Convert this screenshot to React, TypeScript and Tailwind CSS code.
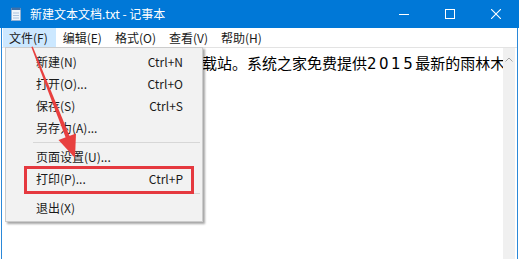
import React from 'react'

const FONT = "font-['Microsoft_YaHei','Noto_Sans_CJK_SC',sans-serif]"

const MENUS = ['文件(F)', '编辑(E)', '格式(O)', '查看(V)', '帮助(H)']

type Item = { label: string; key?: string } | 'sep'

const ITEMS: Item[] = [
  { label: '新建(N)', key: 'Ctrl+N' },
  { label: '打开(O)...', key: 'Ctrl+O' },
  { label: '保存(S)', key: 'Ctrl+S' },
  { label: '另存为(A)...' },
  'sep',
  { label: '页面设置(U)...' },
  { label: '打印(P)...', key: 'Ctrl+P' },
  'sep',
  { label: '退出(X)' },
]

function NotepadIcon() {
  return (
    <svg width="10" height="14" viewBox="0 0 10 14">
      <rect x="0.5" y="1.5" width="9" height="12" fill="#eef4fb" stroke="#8fb0d4" />
      <rect x="0.5" y="0.5" width="9" height="2.5" fill="#3d6fa8" />
      <line x1="2" y1="6" x2="8" y2="6" stroke="#a9c2de" />
      <line x1="2" y1="8.5" x2="8" y2="8.5" stroke="#a9c2de" />
      <line x1="2" y1="11" x2="8" y2="11" stroke="#a9c2de" />
    </svg>
  )
}

function WindowButtons() {
  return (
    <div className="flex h-full">
      <div className="w-[46px] h-full flex items-center justify-center">
        <svg width="10" height="10" viewBox="0 0 10 10">
          <line x1="0" y1="5.5" x2="10" y2="5.5" stroke="#fff" />
        </svg>
      </div>
      <div className="w-[46px] h-full flex items-center justify-center">
        <svg width="10" height="10" viewBox="0 0 10 10">
          <rect x="0.5" y="0.5" width="9" height="9" fill="none" stroke="#fff" />
        </svg>
      </div>
      <div className="w-[46px] h-full flex items-center justify-center">
        <svg width="10" height="10" viewBox="0 0 10 10">
          <path d="M0 0L10 10M10 0L0 10" stroke="#fff" strokeWidth="1.1" />
        </svg>
      </div>
    </div>
  )
}

function FileMenu() {
  return (
    <div className="absolute left-[5px] top-[47px] w-[198px] h-[175px] bg-[#f2f2f2] border border-[#cccccc] shadow-[2px_2px_2px_rgba(0,0,0,0.35)] pt-[3px] text-[12px] text-[#1a1a1a]">
      {ITEMS.map((it, i) =>
        it === 'sep' ? (
          <div key={i} className="h-[7px] flex items-center ml-[27px] mr-[2px]">
            <div className="h-px w-full bg-[#d7d7d7]" />
          </div>
        ) : (
          <div key={i} className="h-[22px] flex items-center justify-between pl-[30px] pr-[19px]">
            <span>{it.label}</span>
            {it.key && <span>{it.key}</span>}
          </div>
        )
      )}
    </div>
  )
}

function Arrow() {
  return (
    <svg className="absolute inset-0 pointer-events-none" width="519" height="259" viewBox="0 0 519 259">
      <polygon points="31.3,47 32.7,46.6 70,137 66,138.6" fill="#e8403f" />
      <polygon points="75,158 58.5,140 76,133.5" fill="#e8403f" />
    </svg>
  )
}

export default function App() {
  return (
    <div className={`relative w-[519px] h-[259px] overflow-hidden bg-white flex flex-col ${FONT}`}>
      {/* title bar */}
      <div className="h-[28px] bg-[#0078d7] flex items-center shrink-0">
        <div className="ml-[11px] flex items-center">
          <NotepadIcon />
        </div>
        <span className="ml-[9px] text-white text-[12px]">新建文本文档.txt - 记事本</span>
        <div className="flex-1" />
        <WindowButtons />
      </div>

      <div className="flex-1 flex flex-col pl-px pr-px">
        <div className="flex-1 flex flex-col border-l border-r border-[#2b88d8]">
          {/* menu bar */}
          <div className="h-[19px] flex items-center text-[12px] text-[#1a1a1a] shrink-0">
            {MENUS.map((m, i) => (
              <div
                key={m}
                className={`h-full flex items-center px-[6px] mr-[1px] ${i === 0 ? 'bg-[#cce8ff] ml-[1px] pr-[8px]' : ''}`}
              >
                {m}
              </div>
            ))}
          </div>

          {/* editor */}
          <div className="flex-1 flex border-t border-[#e3e3e3]">
            <div className="flex-1 overflow-hidden whitespace-nowrap pl-[5px] pt-[6px] text-[15px] leading-[18px] text-black">
              系统之家是国内安全的软件下载站。系统之家免费提供<span className="font-['DejaVu_Sans',sans-serif] tracking-[2.5px]">2015</span>最新的雨林木风系统下载
            </div>
            <div className="w-[12px] bg-[#f0f0f0] flex justify-center pt-[9px] mr-[2px]">
              <svg width="8" height="5" viewBox="0 0 8 5">
                <path d="M0.5 4.5L4 1L7.5 4.5" fill="none" stroke="#a6a6a6" />
              </svg>
            </div>
          </div>
        </div>
      </div>

      <FileMenu />

      {/* highlight box */}
      <div className="absolute left-[24px] top-[166px] w-[170px] h-[28px] border-[3px] border-[#e5393f]" />

      <Arrow />
    </div>
  )
}
